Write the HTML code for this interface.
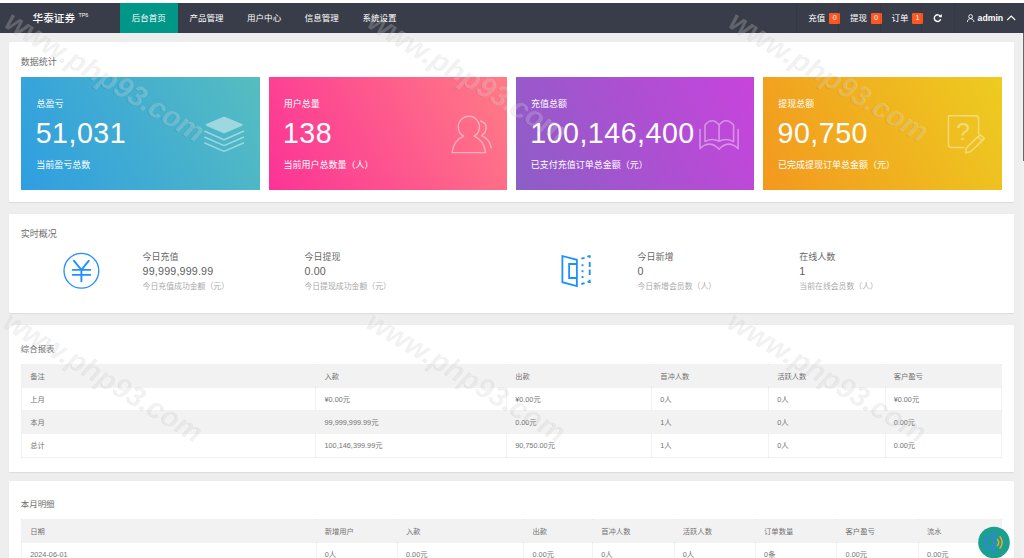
<!DOCTYPE html>
<html lang="zh-CN">
<head>
<meta charset="utf-8">
<title>华泰证券</title>
<style>
*{margin:0;padding:0;box-sizing:border-box}
html,body{width:1024px;height:558px;overflow:hidden;background:#eee}
body{position:relative;font-family:"Liberation Sans","Noto Sans CJK SC",sans-serif;color:#666;-webkit-font-smoothing:antialiased}
.a{position:absolute}
.t{position:absolute;white-space:nowrap;line-height:1}
#top{left:0;top:0;width:1024px;height:3px;background:#fff}
#hd{left:0;top:2.7px;width:1024px;height:30.3px;background:#393d49}
#tab{left:120px;top:2.7px;width:57.7px;height:30.3px;background:#009688}
.nv{font-size:8.53px;color:#fff;top:13.6px}
.logo{font-size:10.67px;color:#fff;font-weight:500;left:32.5px;top:13.2px}
.sup{font-size:5.4px;color:#fff;left:78.4px;top:13.3px}
.bd{position:absolute;top:13px;height:10.7px;width:11px;background:#ff5722;color:#fff;font-size:7.2px;line-height:10.9px;text-align:center;border-radius:1px}
.pn{position:absolute;left:8.7px;width:1005.3px;background:#fff;border-radius:1px;box-shadow:0 0.5px 1px rgba(0,0,0,.08)}
.ti{font-size:9px;color:#6e6e6e;left:20.8px;margin-top:.7px}
.cd{position:absolute;top:77px;height:113px;width:238.6px}
.c1{left:21.3px;background:linear-gradient(63deg,#2f9ee1 0%,#56bdc0 100%)}
.c2{left:268.5px;background:linear-gradient(63deg,#fc3396 0%,#ff7c85 100%)}
.c3{left:515.8px;background:linear-gradient(63deg,#8c5ec6 0%,#c844dc 100%)}
.c4{left:763.1px;background:linear-gradient(63deg,#f3981f 0%,#edcc20 100%)}
.cd .l{font-size:9px;color:#fff;left:15.2px;top:22.5px}
.cd .n{font-size:28.6px;color:#fff;left:14.4px;top:42.2px;letter-spacing:.5px}
.cd .s{font-size:9px;color:#fff;left:14.9px;top:83.6px}
.rl{font-size:9px;color:#686868;top:253.200px}
.rn{font-size:10.67px;color:#606060;top:265.8px;letter-spacing:.2px}
.rs{font-size:7.875px;color:#aaa;top:283px}
table{position:absolute;left:21.1px;width:980.6px;border-collapse:collapse;table-layout:fixed;font-size:7.3px;color:#737373}
td,th{height:23.2px;border:0.55px solid rgba(0,0,0,.05);padding:0 0 .5px 8.1px;text-align:left;font-weight:normal;white-space:nowrap;overflow:hidden}
th,tr.g td{background:#f2f2f2}
.wm{position:absolute;font:italic bold 28.8px "Liberation Sans",sans-serif;color:rgba(255,255,255,.22);transform-origin:0 0;transform:rotate(31deg);white-space:nowrap;line-height:1;text-shadow:-.9px .9px .4px rgba(0,0,0,.08);pointer-events:none}
</style>
</head>
<body>
<div id="top" class="a"></div>
<div id="hd" class="a"></div>
<div id="tab" class="a"></div>
<div class="t logo">华泰证券</div><div class="t sup">TP6</div>
<div class="t nv" style="left:131.7px">后台首页</div>
<div class="t nv" style="left:189.4px">产品管理</div>
<div class="t nv" style="left:247.1px">用户中心</div>
<div class="t nv" style="left:304.8px">信息管理</div>
<div class="t nv" style="left:362.5px">系统设置</div>

<div class="t nv" style="left:808.2px">充值</div><div class="bd" style="left:829.2px">0</div>
<div class="t nv" style="left:850px">提现</div><div class="bd" style="left:870.6px">0</div>
<div class="t nv" style="left:891.6px">订单</div><div class="bd" style="left:912px">1</div>
<svg class="a" style="left:932px;top:12px" width="12" height="12" viewBox="932 12 12 12"><path d="M940.3 16.200A3.300 3.300 0 1 0 940.700 19.300" fill="none" stroke="#fff" stroke-width="1.400"/><path d="M941.800 13.900V17.300H938.400Z" fill="#fff"/></svg>
<svg class="a" style="left:965px;top:13px" width="12" height="11" viewBox="965 13 12 11"><circle cx="970.600" cy="16.600" r="1.900" fill="none" stroke="#fff" stroke-width=".9"/><path d="M967.400 22C967.400 19.800 968.900 18.700 970.600 18.700S973.900 19.800 973.900 22" fill="none" stroke="#fff" stroke-width=".9"/></svg>
<div class="t nv" style="left:977.6px;font-weight:bold;font-size:8.7px;top:14.400px">admin</div>
<svg class="a" style="left:1006px;top:14px" width="11" height="8" viewBox="1006 14 11 8"><path d="M1007.200 20L1011.200 16.100L1015.200 20" fill="none" stroke="#fff" stroke-width="1.100"/></svg>

<div class="a" style="left:795.5px;top:3px;width:.6px;height:30px;background:rgba(0,0,0,.07)"></div>
<div class="a" style="left:837.5px;top:3px;width:.6px;height:30px;background:rgba(0,0,0,.07)"></div>
<div class="a" style="left:879.8px;top:3px;width:.6px;height:30px;background:rgba(0,0,0,.07)"></div>
<div class="a" style="left:920.5px;top:3px;width:.6px;height:30px;background:rgba(0,0,0,.07)"></div>
<div class="a" style="left:953.7px;top:3px;width:.6px;height:30px;background:rgba(0,0,0,.07)"></div>
<!-- panel 1 -->
<div class="pn" style="top:42px;height:160px"></div>
<div class="t ti" style="top:57.2px">数据统计</div>
<div class="cd c1"><div class="t l">总盈亏</div><div class="t n">51,031</div><div class="t s">当前盈亏总数</div></div>
<div class="cd c2"><div class="t l">用户总量</div><div class="t n">138</div><div class="t s">当前用户总数量（人）</div></div>
<div class="cd c3"><div class="t l">充值总额</div><div class="t n">100,146,400</div><div class="t s">已支付充值订单总金额（元）</div></div>
<div class="cd c4"><div class="t l">提现总额</div><div class="t n">90,750</div><div class="t s">已完成提现订单总金额（元）</div></div>

<!-- card icons -->
<svg class="a" style="left:0;top:0" width="1024" height="558" viewBox="0 0 1024 558" fill="none">
<g opacity=".45">
<path d="M206.2 124.1L222.9 116.9Q224.1 116.4 225.3 116.9L242.1 124.1Q243.6 124.9 242.1 125.7L225.3 133.1Q224.1 133.6 222.9 133.1L206.2 125.7Q204.7 124.9 206.2 124.1Z" fill="#fff"/>
<path d="M204.8 131.3L224.1 139.7L243.5 131.3M204.8 137.2L224.1 145.6L243.5 137.2M204.8 143L224.1 151.4L243.5 143" stroke="#fff" stroke-width="1.5" stroke-linecap="round" stroke-linejoin="round"/>
</g>
<g opacity=".46" stroke="#fff" stroke-width="1.4" stroke-linejoin="round" stroke-linecap="round">
<path d="M463.6 136.1A10.6 10.6 0 1 1 474.1 136.1C480 138.5 484.5 144.5 485.6 152.6H452C453.2 144.5 457.5 138.5 463.6 136.1Z"/>
<path d="M480.6 121C484 122 486.3 124.5 486.1 128C486 131.5 484 134 481.6 135.6C486.5 137.5 490 142 491.1 147.6"/>
</g>
<g opacity=".4" stroke="#fff" stroke-width="1.6" stroke-linejoin="round" stroke-linecap="round">
<path d="M700 129.6V148.6Q709.5 139.5 719.1 149.1Q728.6 139.5 738.1 148.6V129.6"/>
<path d="M705 141.6V125Q712 116.500 719.1 124.8Q726.200 116.500 733.6 125V141.6Q726 137.5 719.1 141.300Q712 137.500 705 141.600ZM719.1 124.8V141.3"/>
</g>
<g opacity=".4" stroke="#fff" stroke-width="1.5" stroke-linejoin="round" stroke-linecap="round">
<path d="M978.6 133.5V118.8Q978.6 115.8 975.6 115.8H948.5V144.6Q948.500 147.600 951.500 147.600H963.800"/>
<path d="M966.1 148.1L980.1 134.600L984.3 138.600L970.6 151.800L965.8 152.800ZM977.8 136.800L982 140.8"/>
</g>
<text x="963.1" y="140" font-family="Liberation Sans, sans-serif" font-size="24.5" fill="#fff" opacity=".4" text-anchor="middle">?</text>
</svg>

<!-- panel 2 -->
<div class="pn" style="top:214px;height:99.3px"></div>
<div class="t ti" style="top:229.3px">实时概况</div>
<svg class="a" style="left:62px;top:251px" width="40" height="40" viewBox="62 251 40 40" fill="none" stroke="#1e90ff" stroke-linecap="round"><circle cx="81.4" cy="270.8" r="17.400" stroke-width="1.300"/><path d="M74 260.800L81.400 269.800L88.700 260.800M72.800 269.900H90.200M72.800 274.900H90.200M81.400 269.800V281.300" stroke-width="1.900"/></svg>
<div class="t rl" style="left:142.6px">今日充值</div><div class="t rn" style="left:142.6px">99,999,999.99</div><div class="t rs" style="left:142.6px">今日充值成功金额（元）</div>
<div class="t rl" style="left:304.4px">今日提现</div><div class="t rn" style="left:304.4px">0.00</div><div class="t rs" style="left:304.4px">今日提现成功金额（元）</div>
<svg class="a" style="left:558px;top:252px" width="38" height="38" viewBox="558 252 38 38" fill="none" stroke="#1e90ff" stroke-width="1.800"><path d="M562.400 256L576.900 259.800V286L562.400 282.200ZM577.600 264H569.100V278H577.600"/><path d="M581.300 258.700L584.600 257.800M587.300 256.600L590.300 255.800M581.300 284L584.600 283.200M587.600 282L590.300 281.200M582.500 264.300V266.300M582.500 270.200V272.200M582.500 276.100V278.100M589.700 255.600V257.700M589.700 262V266.900M589.700 269.600V275M589.700 279.800V283" stroke-width="1.900"/></svg>
<div class="t rl" style="left:637.5px">今日新增</div><div class="t rn" style="left:637.5px">0</div><div class="t rs" style="left:637.5px">今日新增会员数（人）</div>
<div class="t rl" style="left:799.3px">在线人数</div><div class="t rn" style="left:799.3px">1</div><div class="t rs" style="left:799.3px">当前在线会员数（人）</div>

<!-- panel 3 -->
<div class="pn" style="top:325.4px;height:146.8px"></div>
<div class="t ti" style="top:344.5px;font-size:8.45px">综合报表</div>
<table style="top:363.9px">
<colgroup><col style="width:294.3px"><col style="width:190.7px"><col style="width:145px"><col style="width:117px"><col style="width:116.500px"><col></colgroup>
<tr><th>备注</th><th>入款</th><th>出款</th><th>首冲人数</th><th>活跃人数</th><th>客户盈亏</th></tr>
<tr><td>上月</td><td>¥0.00元</td><td>¥0.00元</td><td>0人</td><td>0人</td><td>¥0.00元</td></tr>
<tr class="g"><td>本月</td><td>99,999,999.99元</td><td>0.00元</td><td>1人</td><td>0人</td><td>0.00元</td></tr>
<tr><td>总计</td><td>100,146,399.99元</td><td>90,750.00元</td><td>1人</td><td>0人</td><td>0.00元</td></tr>
</table>

<!-- panel 4 -->
<div class="pn" style="top:481px;height:90px"></div>
<div class="t ti" style="top:499.6px;font-size:8.45px">本月明细</div>
<table style="top:519.3px">
<colgroup><col style="width:294.5px"><col style="width:81.3px"><col style="width:126.500px"><col style="width:68.8px"><col style="width:81.500px"><col style="width:81.300px"><col style="width:81.500px"><col style="width:81.500px"><col></colgroup>
<tr><th>日期</th><th>新增用户</th><th>入款</th><th>出款</th><th>首冲人数</th><th>活跃人数</th><th>订单数量</th><th>客户盈亏</th><th>流水</th></tr>
<tr><td>2024-06-01</td><td>0人</td><td>0.00元</td><td>0.00元</td><td>0人</td><td>0人</td><td>0条</td><td>0.00元</td><td>0.00元</td></tr>
</table>

<!-- floating button -->
<svg class="a" style="left:976px;top:524px" width="36" height="36" viewBox="976 524 36 36" fill="none"><circle cx="994" cy="542.500" r="15.8" fill="#1a9f90"/><path d="M994 533.800L988.300 537.800H985.500V546.800H988.300L994 551Z" stroke="#3b7cf0" stroke-width="1.600" stroke-linejoin="round"/><path d="M997.500 539.500Q1000 542.500 997.500 545.500M1000 536.800Q1004.500 542.500 1000 548.200" stroke="#f5a623" stroke-width="1.500" stroke-linecap="round"/></svg>

<!-- scrollbar -->
<div class="a" style="left:1021px;top:33px;width:3px;height:525px;background:#f1f1f1"></div>
<div class="a" style="left:1022.6px;top:33px;width:1.4px;height:128px;background:#666"></div>

<!-- watermarks -->
<div class="wm" style="left:14.7px;top:6.3px">www.php93.com</div>
<div class="wm" style="left:378px;top:6.3px">www.php93.com</div>
<div class="wm" style="left:739px;top:6.3px">www.php93.com</div>
<div class="wm" style="left:14.7px;top:306.3px">www.php93.com</div>
<div class="wm" style="left:378px;top:306.3px">www.php93.com</div>
<div class="wm" style="left:739px;top:306.3px">www.php93.com</div>
</body>
</html>
